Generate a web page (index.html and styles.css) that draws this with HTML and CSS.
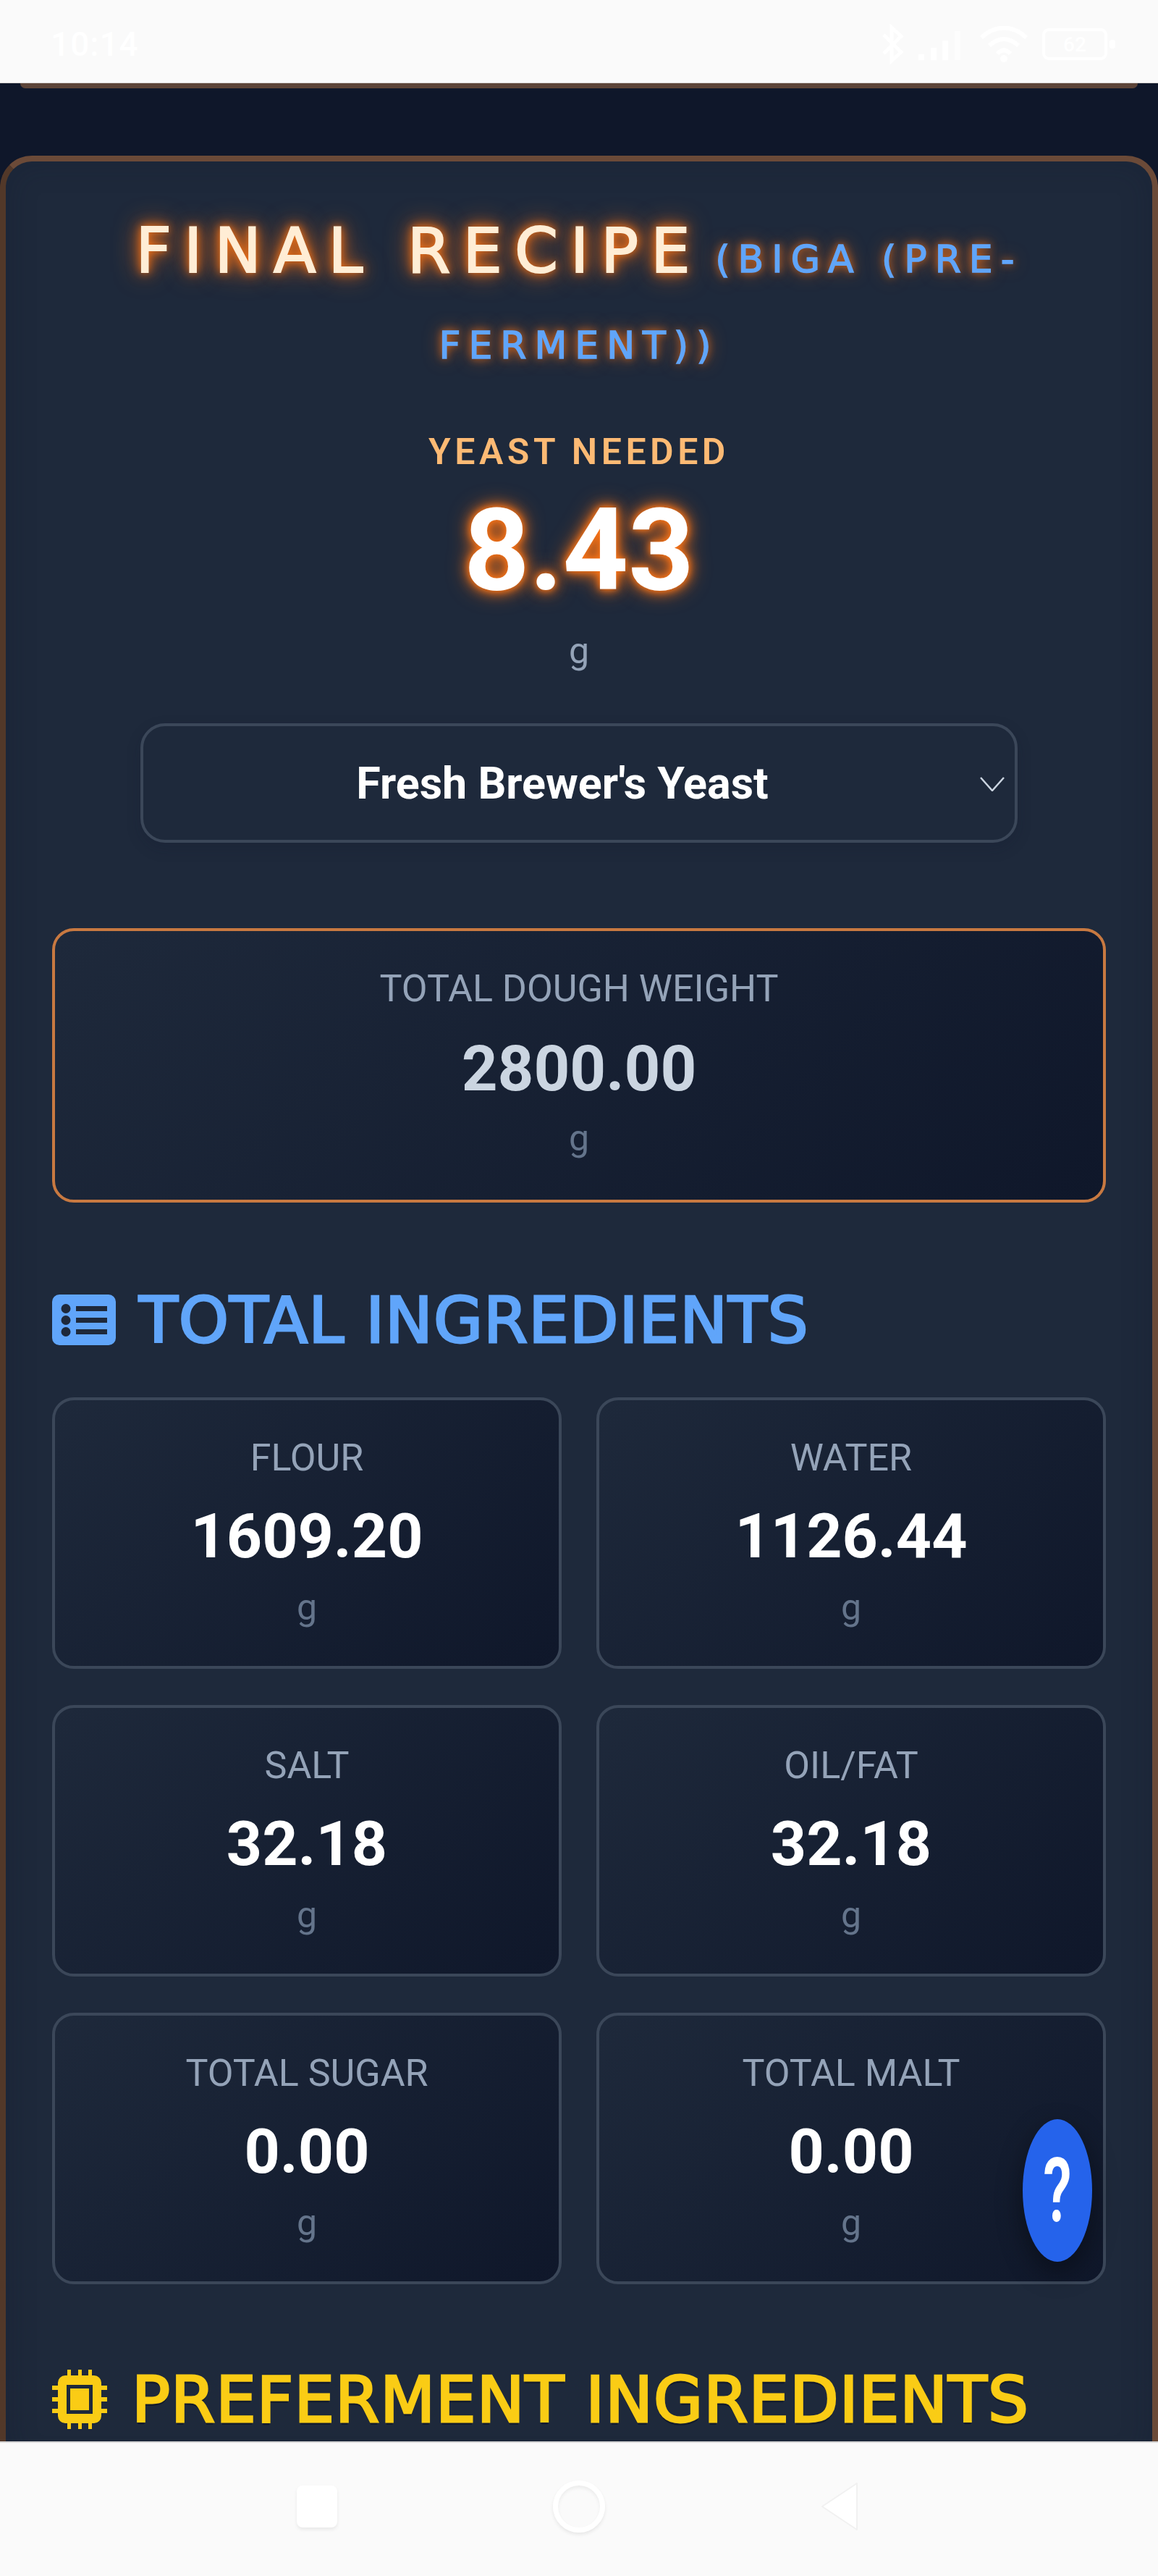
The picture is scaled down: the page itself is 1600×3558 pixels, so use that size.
FILE: index.html
```html
<!DOCTYPE html>
<html lang="en">
<head>
<meta charset="utf-8">
<title>Final Recipe</title>
<link rel="stylesheet" href="styles.css">
</head>
<body>
<div class="screen">
  <header class="status-bar">
    <span class="clock">10:14</span>
    <div class="status-icons">
      <svg class="ic-bt" viewBox="0 0 34 56"><path d="M4 15 L28 39 L15 51 V5 L28 17 L4 41" fill="none" stroke="#fff" stroke-width="5"/></svg>
      <svg class="ic-signal" viewBox="0 0 66 44"><rect x="0" y="36" width="8" height="8" fill="#fff"/><rect x="17" y="27" width="8" height="17" fill="#fff"/><rect x="33" y="17" width="8" height="27" fill="#fff"/><rect x="50" y="4" width="8" height="40" fill="#fdfdfd"/></svg>
      <svg class="ic-wifi" viewBox="0 0 68 50"><path d="M3 16 C22 -2 46 -2 65 16 M14 27 C27 15 41 15 54 27 M25 38 C31 32 37 32 43 38" fill="none" stroke="#fff" stroke-width="6"/><circle cx="34" cy="45" r="5" fill="#fff"/></svg>
      <svg class="ic-batt" viewBox="0 0 106 46"><rect x="3" y="3" width="86" height="40" rx="7" fill="none" stroke="#fff" stroke-width="4"/><rect x="94" y="17" width="8" height="12" rx="3" fill="#fff"/><text x="46" y="33" text-anchor="middle" class="batt-text">62</text></svg>
    </div>
  </header>
  <div class="prev-card"></div>

  <main class="card">
    <h1 class="title"><span class="title-main">FINAL RECIPE</span> <span class="title-sub">(BIGA (PRE-FERMENT))</span></h1>

    <section class="yeast">
      <div class="yeast-label">YEAST NEEDED</div>
      <div class="yeast-value">8.43</div>
      <div class="yeast-unit">g</div>
    </section>

    <div class="select">
      <span class="select-text">Fresh Brewer's Yeast</span>
      <svg class="chevron" viewBox="0 0 34 20"><path d="M1 1 L17 19 L33 1" fill="none" stroke="#cbd5e1" stroke-width="2.5"/></svg>
    </div>

    <section class="total">
      <div class="stat-label">TOTAL DOUGH WEIGHT</div>
      <div class="total-value">2800.00</div>
      <div class="stat-unit">g</div>
    </section>

    <h2 class="section-title blue">
      <svg class="icon-list" viewBox="0 0 88 70"><path fill-rule="evenodd" d="M10 0 H78 A10 10 0 0 1 88 10 V60 A10 10 0 0 1 78 70 H10 A10 10 0 0 1 0 60 V10 A10 10 0 0 1 10 0 Z M19 13 A6.500 6.500 0 1 0 19 26 A6.500 6.500 0 1 0 19 13 Z M19 29 A6.500 6.500 0 1 0 19 42 A6.500 6.500 0 1 0 19 29 Z M19 45 A6.500 6.500 0 1 0 19 58 A6.500 6.500 0 1 0 19 45 Z M33 16 V23 H76 V16 Z M33 32 V39 H76 V32 Z M33 48 V55 H76 V48 Z" fill="#60a5fa"/></svg>
      <span>TOTAL INGREDIENTS</span>
    </h2>

    <div class="grid">
      <div class="stat"><div class="stat-label">FLOUR</div><div class="stat-value">1609.20</div><div class="stat-unit">g</div></div>
      <div class="stat"><div class="stat-label">WATER</div><div class="stat-value">1126.44</div><div class="stat-unit">g</div></div>
      <div class="stat"><div class="stat-label">SALT</div><div class="stat-value">32.18</div><div class="stat-unit">g</div></div>
      <div class="stat"><div class="stat-label">OIL/FAT</div><div class="stat-value">32.18</div><div class="stat-unit">g</div></div>
      <div class="stat"><div class="stat-label">TOTAL SUGAR</div><div class="stat-value">0.00</div><div class="stat-unit">g</div></div>
      <div class="stat"><div class="stat-label">TOTAL MALT</div><div class="stat-value">0.00</div><div class="stat-unit">g</div></div>
    </div>

    <h2 class="section-title yellow">
      <svg class="icon-chip" viewBox="0 0 76 82"><path fill="#facc15" d="M21 0 h5 v10 h-5 Z M36 0 h5 v10 h-5 Z M50 0 h5 v10 h-5 Z M21 72 h5 v10 h-5 Z M36 72 h5 v10 h-5 Z M50 72 h5 v10 h-5 Z M0 22 h10 v6 h-10 Z M0 38 h10 v6 h-10 Z M0 54 h10 v6 h-10 Z M66 22 h10 v6 h-10 Z M66 38 h10 v6 h-10 Z M66 54 h10 v6 h-10 Z"/><path fill="#facc15" fill-rule="evenodd" d="M18 8 H58 A10 10 0 0 1 68 18 V64 A10 10 0 0 1 58 74 H18 A10 10 0 0 1 8 64 V18 A10 10 0 0 1 18 8 Z M20 21 V61 H56 V21 Z"/><rect x="25" y="26" width="26" height="30" fill="#facc15"/></svg>
      <span>PREFERMENT INGREDIENTS</span>
    </h2>
  </main>

  <button class="help"><span class="help-mark">?</span></button>

  <nav class="nav-bar">
    <span class="nav-square"></span>
    <span class="nav-circle"></span>
    <svg class="nav-back" viewBox="0 0 52 68"><path d="M50 2 V66 L2 34 Z" fill="#fff" stroke="#f1f1f1" stroke-width="2" stroke-linejoin="round"/></svg>
  </nav>
</div>
</body>
</html>
```
FILE: styles.css
```css
* { box-sizing: border-box; }
html, body { margin: 0; padding: 0; }
body { background: #0f172a; font-family: Roboto, "Liberation Sans", sans-serif; }

.screen {
  position: relative;
  width: 1600px;
  height: 3558px;
  overflow: hidden;
  background: #0f172a;
  display: flex;
  flex-direction: column;
}

/* system bars */
.status-bar {
  flex: none;
  height: 115px;
  background: #fafafa;
  border-bottom: 1px solid #d6d3d1;
  display: flex;
  justify-content: space-between;
  align-items: center;
  padding: 8px 55px 0 70px;
}
.clock { color: #fff; font-size: 46px; font-weight: 500; letter-spacing: 1px; }
.status-icons { display: flex; align-items: center; gap: 18px; }
.ic-bt { width: 34px; height: 56px; }
.ic-signal { width: 66px; height: 44px; }
.ic-wifi { width: 68px; height: 50px; }
.ic-batt { width: 106px; height: 46px; }
.batt-text { fill: #fff; font: 500 28px Roboto, sans-serif; }

.prev-card {
  flex: none;
  height: 7px;
  margin: 0 28px;
  background: #5c4438;
  border-radius: 0 0 10px 10px;
}

/* main card */
.card {
  flex: none;
  margin: 93px 0 0;
  padding: 64px 64px 0 64px;
  height: 3200px;
  background: #1e293b;
  border: 8px solid #6b4a38;
  border-left-color: #523829;
  border-radius: 44px;
  box-shadow: inset 0 0 40px rgba(15, 23, 42, 0.25);
}

.title {
  margin: 0;
  text-align: center;
  font-size: 56px;
  font-weight: 400;
  line-height: 118px;
  padding: 0 20px;
  font-family: "DejaVu Sans", Roboto, sans-serif;
}
.title-main {
  font-size: 86px;
  font-weight: 400;
  letter-spacing: 17px;
  color: #ffedd5;
  -webkit-text-stroke: 2px #ffedd5;
  text-shadow: 0 0 12px #f97316, 0 0 20px #f97316, 0 0 36px #f97316;
}
.title-sub {
  font-size: 52px;
  font-weight: 400;
  letter-spacing: 11px;
  color: #60a5fa;
  -webkit-text-stroke: 1.500px #60a5fa;
  text-shadow: 0 0 12px #f97316, 0 0 24px rgba(249, 115, 22, 0.8);
}

.yeast { text-align: center; margin-top: 59px; }
.yeast-label {
  font-size: 50px;
  line-height: 58px;
  font-weight: 600;
  letter-spacing: 5.500px;
  color: #fdba74;
}
.yeast-value {
  font-size: 158px;
  line-height: 186px;
  font-weight: 700;
  color: #fff;
  margin-top: 14px;
  text-shadow: 0 0 10px #f97316, 0 0 18px #f97316, 0 0 30px rgba(249, 115, 22, 0.8);
}
.yeast-unit {
  font-size: 50px;
  line-height: 60px;
  color: #94a3b8;
  margin-top: 16px;
}

.select {
  position: relative;
  margin: 70px 122px 0 122px;
  height: 165px;
  border: 4px solid #3b4759;
  border-radius: 34px;
  display: flex;
  align-items: center;
  justify-content: center;
  padding-right: 46px;
  box-shadow: 0 8px 20px rgba(15, 23, 42, 0.18);
}
.select-text { font-size: 61px; font-weight: 700; color: #fff; }
.chevron { position: absolute; right: 14px; top: 70px; width: 34px; height: 20px; }

.total {
  margin-top: 118px;
  height: 379px;
  border: 4px solid #c87941;
  border-radius: 30px;
  background: linear-gradient(135deg, #1e293b 0%, #0f172a 100%);
  text-align: center;
  padding-top: 50px;
}
.stat-label {
  font-size: 52px;
  line-height: 60px;
  color: #94a3b8;
}
.total-value {
  font-size: 87px;
  line-height: 104px;
  font-weight: 700;
  color: #cbd5e1;
  margin-top: 28px;
}
.stat-unit {
  font-size: 50px;
  line-height: 60px;
  color: #64748b;
  margin-top: 14px;
}

.section-title {
  margin: 127px 0 0;
  display: flex;
  align-items: center;
  gap: 32px;
  height: 70px;
  font-family: "DejaVu Sans", Roboto, sans-serif;
  font-weight: 400;
  font-size: 88px;
  letter-spacing: 1px;
  white-space: nowrap;
}
.section-title.blue { color: #60a5fa; -webkit-text-stroke: 3px #60a5fa; }
.section-title.yellow { color: #facc15; -webkit-text-stroke: 3px #facc15; margin-top: 124px; gap: 34px; text-shadow: 0 4px 0 rgba(15, 23, 42, 0.75); }
.icon-list { width: 88px; height: 70px; flex: none; }
.icon-chip { width: 76px; height: 82px; flex: none; }

.grid {
  margin-top: 72px;
  display: grid;
  grid-template-columns: 1fr 1fr;
  gap: 50px 48px;
}
.stat {
  height: 375px;
  border: 4px solid #3b4759;
  border-radius: 30px;
  background: linear-gradient(135deg, #1e293b 0%, #0f172a 100%);
  text-align: center;
  padding-top: 50px;
}
.stat-value {
  font-size: 86px;
  line-height: 104px;
  font-weight: 700;
  color: #fff;
  margin-top: 26px;
}
.stat .stat-unit { margin-top: 16px; }

/* floating help button */
.help {
  position: absolute;
  left: 1413px;
  top: 2927px;
  width: 96px;
  height: 197px;
  padding: 0;
  border: 0;
  border-radius: 50%;
  background: #2563eb;
  color: #fff;
  font: 600 80px Roboto, sans-serif;
  box-shadow: 0 14px 36px rgba(0, 0, 0, 0.4);
}
.help-mark { display: inline-block; transform: scaleY(1.55); }

.nav-bar {
  position: absolute;
  left: 0;
  right: 0;
  bottom: 0;
  height: 186px;
  background: #fafafa;
  border-top: 2px solid #d6d6d6;
}
.nav-square {
  position: absolute;
  left: 410px;
  top: 59px;
  width: 56px;
  height: 58px;
  border-radius: 8px;
  background: #fff;
  box-shadow: 0 3px 5px rgba(0, 0, 0, 0.07);
}
.nav-circle {
  position: absolute;
  left: 764px;
  top: 52px;
  width: 72px;
  height: 72px;
  border-radius: 50%;
  border: 7px solid #fff;
  box-shadow: 0 3px 5px rgba(0, 0, 0, 0.08), inset 0 3px 5px rgba(0, 0, 0, 0.06);
}
.nav-back {
  position: absolute;
  left: 1134px;
  top: 54px;
  width: 52px;
  height: 68px;
}
```
